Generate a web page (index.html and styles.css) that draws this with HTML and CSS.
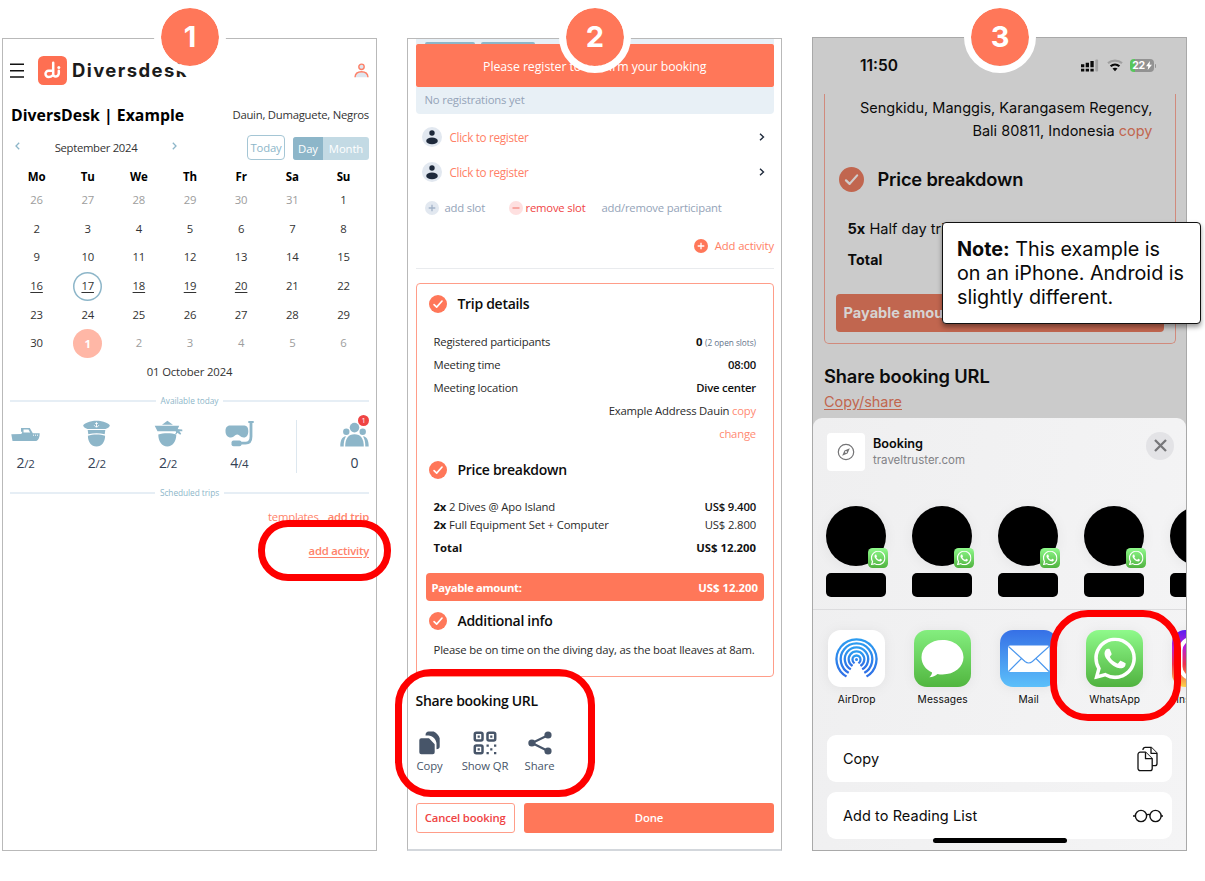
FILE: index.html
```html
<!DOCTYPE html>
<html lang="en">
<head>
<meta charset="utf-8">
<title>Diversdesk – share a booking</title>
<link rel="stylesheet" href="styles.css">
</head>
<body>
<svg class="defs" width="0" height="0">
  <defs>
    <linearGradient id="green" x1="0" y1="0" x2="0" y2="1"><stop offset="0" stop-color="#8ffa8b"/><stop offset="1" stop-color="#50b23f"/></linearGradient>
    <linearGradient id="green2" x1="0" y1="0" x2="0" y2="1"><stop offset="0" stop-color="#84ee7f"/><stop offset="1" stop-color="#51b63f"/></linearGradient>
    <linearGradient id="blue" x1="0" y1="0" x2="0" y2="1"><stop offset="0" stop-color="#3670e6"/><stop offset="1" stop-color="#5cc0fa"/></linearGradient>
    <linearGradient id="air" x1="0" y1="0" x2="0" y2="1"><stop offset="0" stop-color="#2c9cf0"/><stop offset="1" stop-color="#2f6fe6"/></linearGradient>
    <linearGradient id="insta" x1="0" y1="0" x2="0" y2="1"><stop offset="0" stop-color="#5a1df0"/><stop offset=".3" stop-color="#b91fd6"/><stop offset=".6" stop-color="#f0304c"/><stop offset="1" stop-color="#fcd34a"/></linearGradient>
    <symbol id="check" viewBox="0 0 20 20"><circle cx="10" cy="10" r="10"/><path d="M5.600 10.700l2.900 2.800 6-6.800" fill="none" stroke="var(--tick,#fff)" stroke-width="1.800" stroke-linecap="round" stroke-linejoin="round"/></symbol>
    <symbol id="person" viewBox="0 0 20 20"><circle cx="10" cy="10" r="10" fill="#e2e8f0"/><circle cx="10" cy="6" r="2.700" fill="#1e293b"/><ellipse cx="10" cy="13.900" rx="5.800" ry="3.400" fill="#1e293b"/></symbol>
    <symbol id="wa" viewBox="0 0 24 24"><path d="M17.472 14.382c-.297-.149-1.758-.867-2.03-.967-.273-.099-.471-.148-.67.15-.197.297-.767.966-.94 1.164-.173.199-.347.223-.644.075-.297-.15-1.255-.463-2.39-1.475-.883-.788-1.48-1.761-1.653-2.059-.173-.297-.018-.458.13-.606.134-.133.298-.347.446-.52.149-.174.198-.298.298-.497.099-.198.05-.371-.025-.52-.075-.149-.669-1.612-.916-2.207-.242-.579-.487-.5-.669-.51-.173-.008-.371-.01-.57-.01-.198 0-.52.074-.792.372-.272.297-1.04 1.016-1.04 2.479 0 1.462 1.065 2.875 1.213 3.074.149.198 2.096 3.2 5.077 4.487.709.306 1.262.489 1.694.625.712.227 1.36.195 1.871.118.571-.085 1.758-.719 2.006-1.413.248-.694.248-1.289.173-1.413-.074-.124-.272-.198-.57-.347m-5.421 7.403h-.004a9.87 9.87 0 01-5.031-1.378l-.361-.214-3.741.982.998-3.648-.235-.374a9.86 9.86 0 01-1.51-5.26c.001-5.45 4.436-9.884 9.888-9.884 2.64 0 5.122 1.03 6.988 2.898a9.825 9.825 0 012.893 6.994c-.003 5.45-4.437 9.884-9.885 9.884m8.413-18.297A11.815 11.815 0 0012.05 0C5.495 0 .16 5.335.157 11.892c0 2.096.547 4.142 1.588 5.945L.057 24l6.305-1.654a11.882 11.882 0 005.683 1.448h.005c6.554 0 11.89-5.335 11.893-11.893a11.821 11.821 0 00-3.48-8.413z" fill="#fff"/></symbol>
    <symbol id="waapp" viewBox="0 0 57 57"><rect width="57" height="57" rx="13" fill="url(#green)"/><use href="#wa" x="8" y="7.500" width="42" height="42"/></symbol>
  </defs>
</svg>

<main class="board">
  <section class="phone one">
    <header class="top">
      <svg class="burger" width="14" height="15"><path d="M0 1.200h14M0 7.700h14M0 14h14" stroke="#111" stroke-width="1.500"/></svg>
      <svg class="logo" width="29" height="29" viewBox="0 0 29 29"><rect width="29" height="29" rx="5.500" fill="#fe6f52"/><g fill="none" stroke="#fff" stroke-width="2.500" stroke-linecap="round" stroke-linejoin="round"><path d="M15.200 6.700v11.500a2.400 2.400 0 0 0 2 2.300 3.200 3.200 0 0 0 3.600-3.200v-2.500"/><path d="M14.900 14.800h-4.200a3 3 0 0 0-3.200 3 3 3 0 0 0 3.200 3.100c1.600 0 2.700-.4 4-1.600"/></g><circle cx="20.800" cy="11.400" r="1.500" fill="#fff"/></svg>
      <span class="brand">Diversdesk</span>
      <svg class="user" width="15" height="15" viewBox="0 0 15 15" fill="#dfe6ef" stroke="#fd8068" stroke-width="1.400"><circle cx="7.500" cy="3.800" r="2.700"/><path d="M1 14.200c.2-3.600 2.800-5.400 6.500-5.400s6.300 1.800 6.500 5.400"/></svg>
    </header>
    <div class="title"><h1>DiversDesk | Example</h1><span>Dauin, Dumaguete, Negros</span></div>
    <div class="monthbar">
      <svg width="5" height="8"><path d="M4.200.8L1 4l3.200 3.200" fill="none" stroke="#8db6c9" stroke-width="1.300"/></svg>
      <span class="month">September 2024</span>
      <svg width="5" height="8"><path d="M.8.8L4 4 .8 7.200" fill="none" stroke="#8db6c9" stroke-width="1.300"/></svg>
      <span class="today">Today</span>
      <span class="switch"><b>Day</b><i>Month</i></span>
    </div>
    <div class="cal">
      <b>Mo</b><b>Tu</b><b>We</b><b>Th</b><b>Fr</b><b>Sa</b><b>Su</b>
      <span class="off">26</span><span class="off">27</span><span class="off">28</span><span class="off">29</span><span class="off">30</span><span class="off">31</span><span>1</span>
      <span>2</span><span>3</span><span>4</span><span>5</span><span>6</span><span>7</span><span>8</span>
      <span>9</span><span>10</span><span>11</span><span>12</span><span>13</span><span>14</span><span>15</span>
      <span class="u">16</span><span class="u ringed">17</span><span class="u">18</span><span class="u">19</span><span class="u">20</span><span>21</span><span>22</span>
      <span>23</span><span>24</span><span>25</span><span>26</span><span>27</span><span>28</span><span>29</span>
      <span>30</span><span class="picked">1</span><span class="off">2</span><span class="off">3</span><span class="off">4</span><span class="off">5</span><span class="off">6</span>
    </div>
    <div class="date">01 October 2024</div>
    <div class="rule"><span>Available today</span></div>
    <div class="stock">
      <div class="item"><svg width="29" height="28" viewBox="0 0 29 28" fill="#8db6c9"><path d="M.3 14.300l10-.3 1.200-2.300H10V8h8.800l3 5.300h6.900c0 4-1 6.800-3.400 7.600H1.500z"/><path d="M12.500 9.500h5l1.700 3h-6.700z" fill="#fff"/><path d="M22 15.200h5" stroke="#fff" stroke-dasharray="1 1"/></svg><p>2<small>/2</small></p></div>
      <div class="item"><svg width="29" height="28" viewBox="0 0 29 28" fill="#8db6c9"><path d="M1.300 5.500C1.300 3.600 8 .8 14.500.8S27.700 3.600 27.700 5.500c0 1.400-1.600 2.700-4.200 3.500h-18C2.900 8.200 1.300 6.900 1.300 5.500z"/><path d="M5.700 10h17.600l-.6 4.300c-5-1.500-11.400-1.500-16.400 0z"/><path d="M5.900 15.800c5-1.800 12.200-1.800 17.200 0 0 6-3.300 10.800-8.600 10.800s-8.600-4.800-8.600-10.800z"/><path d="M14.500 2.200v5M12.300 5.300c.4 2 4 2 4.400 0M13.200 3.500h2.600" fill="none" stroke="#fff" stroke-width=".9"/></svg><p>2<small>/2</small></p></div>
      <div class="item"><svg width="29" height="28" viewBox="0 0 29 28" fill="#8db6c9"><path d="M8 4.800L13.400.8l5.500 4zM.7 5.800h24.500l-2.500 5.500H3.500z"/><path d="M22.700 9l5.500.6.2 1.600-3 .1 1.800 2.500-1 .9-2.800-2-1 1.600-1.200-.8z"/><path d="M4.300 14.500c5-1.600 13.200-1.600 18 0 0 6.700-3.500 12-9 12s-9-5.300-9-12z"/><path d="M4 12.500h18" stroke="#fff"/></svg><p>2<small>/2</small></p></div>
      <div class="item"><svg width="29" height="28" viewBox="0 0 29 28" fill="#8db6c9"><path d="M5 5.500h14.500C22 5.500 23.300 7.800 23.300 11c0 4-1.500 6.500-4.600 6.500-3.400 0-4-3-6.500-3s-3 3-6.200 3C2.500 17.500.5 15 .5 11 .5 7.800 2 5.500 5 5.500z"/><path d="M26 2v14.500c0 3.800-1.800 6.700-5.500 6.700H15" fill="none" stroke="#8db6c9" stroke-width="2.800"/><path d="M23.300 1h5.400v2h-5.400z"/><rect x="6.500" y="20.500" width="10" height="5.700" rx="2"/></svg><p>4<small>/4</small></p></div>
      <div class="item crowd"><svg width="29" height="28" viewBox="0 0 29 28" fill="#8db6c9"><circle cx="14.500" cy="7.600" r="4.800"/><circle cx="6.300" cy="11.800" r="3.200"/><circle cx="22.700" cy="11.800" r="3.200"/><path d="M5.200 26.500c0-8 3-12.300 9.300-12.300s9.300 4.300 9.300 12.300z"/><path d="M.3 26.500c0-6 1.600-9.800 5.700-10.200C4.300 19 3.700 22.500 3.700 26.500zM28.700 26.500c0-6-1.600-9.800-5.700-10.200 1.700 2.700 2.300 6.200 2.300 10.200z"/></svg><em>1</em><p>0</p></div>
    </div>
    <div class="rule second"><span>Scheduled trips</span></div>
    <div class="links"><a>templates</a><a class="sb">add trip</a></div>
    <div class="links act"><a class="sb">add activity</a></div>
  </section>

  <section class="phone two">
    <div class="strip"><i></i><i></i></div>
    <div class="banner">Please register to confirm your booking</div>
    <div class="none">No registrations yet</div>
    <div class="reg"><svg width="20" height="20"><use href="#person"/></svg><span>Click to register</span><svg width="6" height="8"><path d="M1 .8L4.500 4 1 7.200" fill="none" stroke="#1e293b" stroke-width="1.400"/></svg></div>
    <div class="reg"><svg width="20" height="20"><use href="#person"/></svg><span>Click to register</span><svg width="6" height="8"><path d="M1 .8L4.500 4 1 7.200" fill="none" stroke="#1e293b" stroke-width="1.400"/></svg></div>
    <div class="slots">
      <svg width="14" height="14"><circle cx="7" cy="7" r="7" fill="#e2e8f0"/><path d="M3.700 7h6.600M7 3.700v6.600" stroke="#a3b3c8" stroke-width="1.300"/></svg><span class="add">add slot</span>
      <svg width="14" height="14"><circle cx="7" cy="7" r="7" fill="#fee0e0"/><path d="M3.500 7h7" stroke="#f58a82" stroke-width="1.300"/></svg><span class="rem">remove slot</span><span class="par">add/remove participant</span>
    </div>
    <div class="addact"><svg width="14" height="14"><circle cx="7" cy="7" r="7" fill="#ff7759"/><path d="M3.700 7h6.600M7 3.700v6.600" stroke="#fff" stroke-width="1.300"/></svg><span>Add activity</span></div>
    <div class="card">
      <h2><svg width="18" height="18" fill="#ff7759"><use href="#check"/></svg>Trip details</h2>
      <dl class="trip">
        <div><dt>Registered participants</dt><dd><b>0</b> <small>(2 open slots)</small></dd></div>
        <div><dt>Meeting time</dt><dd class="sb">08:00</dd></div>
        <div><dt>Meeting location</dt><dd class="sb">Dive center</dd></div>
        <div><dt></dt><dd>Example Address Dauin <a>copy</a></dd></div>
        <div><dt></dt><dd><a>change</a></dd></div>
      </dl>
      <h2 class="h-price"><svg width="18" height="18" fill="#ff7759"><use href="#check"/></svg>Price breakdown</h2>
      <dl class="price">
        <div><dt><b>2x</b> 2 Dives @ Apo Island</dt><dd class="sb">US$ 9.400</dd></div>
        <div><dt><b>2x</b> Full Equipment Set + Computer</dt><dd>US$ 2.800</dd></div>
        <div class="total"><dt>Total</dt><dd>US$ 12.200</dd></div>
      </dl>
      <div class="pay"><span>Payable amount:</span><span class="sum">US$ 12.200</span></div>
      <h2 class="h-info"><svg width="18" height="18" fill="#ff7759"><use href="#check"/></svg>Additional info</h2>
      <p class="info">Please be on time on the diving day, as the boat lleaves at 8am.</p>
    </div>
    <h2 class="share">Share booking URL</h2>
    <div class="actions">
      <div><svg width="24" height="24" fill="#475569"><path d="M3.300 7.300H11l5.700 6V21.200a2 2 0 0 1-2 2H3.300a2 2 0 0 1-2-2V9.300a2 2 0 0 1 2-2z"/><path d="M7.500 4.500C7.500 1.500 9 .5 10.500.5h5.200c3 1.500 5.300 4 6 6.700v8.300c0 1.800-1.300 2.700-3.200 2.700v-5.500c0-4-4-8.200-8-8.200z"/></svg><span>Copy</span></div>
      <div><svg width="24" height="24" fill="none" stroke="#475569" stroke-width="2.500"><rect x="1.800" y="1.800" width="7.700" height="7.700" rx="1.500"/><rect x="14.500" y="1.800" width="7.700" height="7.700" rx="1.500"/><rect x="1.800" y="14.500" width="7.700" height="7.700" rx="1.500"/><g fill="#475569" stroke="none"><path d="M4.600 4.600h2.200v2.200H4.600zM17.200 4.600h2.200v2.200h-2.200zM4.600 17.200h2.200v2.200H4.600zM13.500 13.500h2.300v2.300h-2.300zM17.200 17.200h2.200v2.200h-2.200zM21 13.500h2.300v2.300H21zM13.500 21h2.300v2.300h-2.300zM21 21h2.300v2.300H21z"/></g></svg><span>Show QR</span></div>
      <div><svg width="24" height="24" fill="#475569"><path d="M20 4.200L4 12l16 8" fill="none" stroke="#475569" stroke-width="2.200"/><circle cx="20" cy="4" r="3.600"/><circle cx="3.900" cy="12" r="3.600"/><circle cx="20" cy="20" r="3.600"/></svg><span>Share</span></div>
    </div>
    <div class="buttons"><button class="cancel">Cancel booking</button><button class="done">Done</button></div>
  </section>

  <section class="phone three">
    <div class="status">
      <span class="clock">11:50</span>
      <svg class="signal" width="20" height="14"><path d="M1 5.200h3.300v3H1zM5.700 3.800H9v4.400H5.700zM10.400 2h3.300v6.200h-3.300zM1 9.800h3.300v2.700H1zM5.700 9.800H9v2.700H5.700zM10.400 9.800h3.300v2.700h-3.300z" fill="#0a0a0a"/><rect x="15.300" y=".5" width="2.800" height="12" rx="1" fill="#a3a3a3"/></svg>
      <svg class="wifi" width="16" height="13" fill="none" stroke-width="2.200"><path d="M1 4.200c4-3.500 10-3.500 14 0" stroke="#a0a0a0"/><path d="M3.600 7.200c2.600-2.300 6.200-2.300 8.800 0" stroke="#0a0a0a"/><path d="M8 12.300L5.500 9.600c1.500-1.300 3.500-1.300 5 0z" fill="#0a0a0a"/></svg>
      <span class="battery">22<svg width="6" height="9"><path d="M4 0L0 5.200h2.300L1.700 9 6 3.700H3.500z" fill="#fff"/></svg></span><i class="nub"></i>
    </div>
    <div class="pcard">
      <p class="addr">Sengkidu, Manggis, Karangasem Regency,<br>Bali 80811, Indonesia <a>copy</a></p>
      <h2><svg width="25" height="25" fill="#c1664f"><use href="#check"/></svg>Price breakdown</h2>
      <p class="half"><b>5x</b> Half day trip</p>
      <p class="tot">Total</p>
      <div class="ppay">Payable amount:</div>
    </div>
    <h2 class="pshare">Share booking URL</h2>
    <a class="cs">Copy/share</a>
    <div class="sheet">
      <div class="head">
        <span class="tile"><svg width="18" height="18" fill="none" stroke="#747476" stroke-width="1.200"><circle cx="9" cy="9" r="7.700"/><path d="M12.800 5.200L10.500 10.500 5.200 12.800 7.500 7.500z" fill="#747476" stroke="none"/><circle cx="9" cy="9" r="1" fill="#fff" stroke="none"/></svg></span>
        <span class="meta"><b>Booking</b><i>traveltruster.com</i></span>
        <span class="x"><svg width="13" height="13"><path d="M1 1l11 11M12 1L1 12" stroke="#77777a" stroke-width="2.300"/></svg></span>
      </div>
      <div class="people">
        <div><i></i><svg width="20" height="20"><use href="#waapp"/></svg><b></b></div>
        <div><i></i><svg width="20" height="20"><use href="#waapp"/></svg><b></b></div>
        <div><i></i><svg width="20" height="20"><use href="#waapp"/></svg><b></b></div>
        <div><i></i><svg width="20" height="20"><use href="#waapp"/></svg><b></b></div>
        <div><i></i><b></b></div>
      </div>
      <div class="apps">
        <div><svg width="57" height="57"><rect width="57" height="57" rx="13" fill="#fff"/><g fill="none" stroke="url(#air)" stroke-width="2.300"><path d="M19.200 47A20 20 0 1 1 37.800 47"/><path d="M21.300 43.200A15.800 15.800 0 1 1 35.700 43.200" /><path d="M23.200 39.500A11.700 11.700 0 1 1 33.800 39.500"/><path d="M24.600 36A7.800 7.800 0 1 1 32.400 36"/><circle cx="28.500" cy="29.500" r="4"/></g><path d="M28.500 30L40 49H17z" fill="#fff"/><circle cx="28.500" cy="29.500" r="1.500" fill="#2e86eb"/></svg><span>AirDrop</span></div>
        <div><svg width="57" height="57"><rect width="57" height="57" rx="13" fill="url(#green2)"/><path d="M28.500 10C40.500 10 49.500 17.500 49.500 27.300S40.500 44.500 28.500 44.500c-1.800 0-3.400-.1-5-.5-2 1.600-4.800 3-8.200 3.300 1.600-1.300 2.600-3 2.800-4.800C11.600 39.600 7.500 34 7.500 27.300 7.500 17.500 16.500 10 28.500 10z" fill="#fff"/></svg><span>Messages</span></div>
        <div><svg width="57" height="57"><rect width="57" height="57" rx="13" fill="url(#blue)"/><rect x="8" y="15.500" width="41.500" height="26.500" rx="2" fill="#fff"/><path d="M8.500 16.500L25 31.500q3.700 3 7.400 0L49 16.500M8.500 41.500L21.500 28.500M49 41.500L36 28.500" fill="none" stroke="#4a97ee" stroke-width="1.100"/></svg><span>Mail</span></div>
        <div><svg width="57" height="57"><use href="#waapp"/></svg><span>WhatsApp</span></div>
        <div><svg width="57" height="57"><rect width="57" height="57" rx="13" fill="url(#insta)"/><rect x="8.500" y="8.500" width="40" height="40" rx="12" fill="none" stroke="#fff" stroke-width="4"/></svg><span>Instagram</span></div>
      </div>
      <div class="opt">Copy<svg width="22" height="26" viewBox="0 0 22 26" fill="#fff" stroke="#111" stroke-width="1.300" stroke-linejoin="round"><path d="M6 4v-.5A2.200 2.200 0 0 1 8.200 1.300H14l6 6V17.500a2.200 2.200 0 0 1-2.200 2.200H13"/><path d="M14 1.300V7.300h6"/><path d="M3.200 6.200H8.500l6.700 6.500V22.500a2.200 2.200 0 0 1-2.200 2.200H3.200A2.200 2.200 0 0 1 1 22.500V8.400a2.200 2.200 0 0 1 2.200-2.200z"/><path d="M8.500 6.200v6.500h6.700"/></svg></div>
      <div class="opt wide">Add to Reading List<svg class="glasses" width="30" height="14" fill="none" stroke="#111" stroke-width="1.400"><circle cx="8" cy="7" r="5.600"/><circle cx="22.500" cy="7" r="5.600"/><path d="M13.300 6q2-1.300 3.900 0M0 7h2.500M28 7h2.500"/></svg></div>
      <div class="home"></div>
    </div>
  </section>

  <div class="badge b1">1</div>
  <div class="badge b2">2</div>
  <div class="badge b3">3</div>
  <div class="mark m1"></div>
  <div class="mark m2"></div>
  <div class="mark m3"></div>
  <aside class="note"><b>Note:</b> This example is<br>on an iPhone. Android is<br>slightly different.</aside>
</main>
</body>
</html>
```
FILE: styles.css
```css
* { box-sizing: border-box; }
body { margin: 0; background: #fff; }
p, h1, h2, dl, dd { margin: 0; }
i, em { font-style: normal; }
svg { display: block; flex: none; }
.defs { position: absolute; }
.board { position: relative; width: 1205px; height: 881px; overflow: hidden; display: flex; align-items: flex-start; gap: 30px; padding: 38px 0 0 2px; }
.phone { flex: none; width: 375px; height: 813px; border: 1px solid #b9b9b9; overflow: hidden; font-family: "Open Sans", "Noto Sans", sans-serif; font-size: 11.300px; line-height: 16px; color: #222; white-space: nowrap; letter-spacing: -.2px; display: flex; flex-direction: column; }
.sb { font-weight: 600; }

/* Screen 1: planner */
.one { padding: 0 7px; }
.top { height: 62px; display: flex; align-items: center; }
.logo { margin: 0 5px 0 14px; }
.brand { font: 650 18.500px/24px Inter, sans-serif; letter-spacing: 1.400px; color: #1b1b1b; }
.user { margin-left: auto; }
.title { height: 28px; display: flex; align-items: center; justify-content: space-between; color: #333; letter-spacing: -.24px; }
.title h1 { font-size: 15.800px; font-weight: 700; color: #000; padding-left: 1px; letter-spacing: .03px; }
.monthbar { height: 38px; display: flex; align-items: center; padding-left: 5px; letter-spacing: -.3px; }
.monthbar svg { margin-top: -4px; }
.month { width: 152px; text-align: center; color: #333; }
.today { margin-left: auto; width: 38px; height: 25px; line-height: 23px; text-align: center; border: 1px solid #a5c6d5; border-radius: 4px; color: #8db6c9; letter-spacing: -.15px; position: relative; top: -.5px; }
.switch { margin-left: 8px; width: 76px; height: 23px; line-height: 24px; display: flex; border-radius: 3px; overflow: hidden; color: #fff; text-align: center; background: #c3dae4; letter-spacing: -.1px; }
.switch b { width: 30px; background: #8db6c9; font-weight: 400; }
.switch i { flex: 1; }
.cal { display: grid; grid-template-columns: repeat(7, 1fr); grid-template-rows: 19px repeat(6, 28.600px); place-items: center; padding-left: 1px; color: #333; font-size: 11.300px; }
.cal b { font-size: 11.500px; color: #000; font-weight: 700; }
.cal .off { color: #9d9d9d; }
.cal .u { text-decoration: underline; text-underline-offset: 2px; }
.ringed, .picked { width: 29px; height: 29px; line-height: 27px; border-radius: 50%; text-align: center; box-shadow: inset 0 0 0 1.500px #8db6c9; }
.cal .picked { box-shadow: none; background: #ffb7a6; color: #fff; font-weight: 700; line-height: 29px; }
.date { height: 28px; line-height: 28px; text-align: center; color: #333; letter-spacing: -.12px; }
.rule { height: 30px; display: flex; align-items: center; gap: 5px; font-size: 8.300px; letter-spacing: -.05px; color: #8db6c9; }
.rule::before, .rule::after { content: ""; height: 2px; flex: 1; background: #e6eef5; }
.stock { position: relative; height: 62px; padding: 4px 0 0 1px; display: flex; }
.stock::after { content: ""; position: absolute; left: 286px; top: 4px; width: 1px; height: 53px; background: #dde7ef; }
.item { width: 71.300px; }
.item p { width: 29px; height: 26px; line-height: 30px; text-align: center; font-size: 14px; color: #334155; font-weight: 500; }
.item small { font-size: 11.500px; }
.crowd { position: relative; width: 29px; margin-left: auto; }
.crowd em { position: absolute; right: 0; top: -5px; width: 11px; height: 11px; border-radius: 50%; background: #ef4444; color: #fff; font-size: 7.500px; line-height: 11px; text-align: center; }
.links { margin-top: 1px; height: 18px; display: flex; justify-content: flex-end; gap: 9px; color: #ff826a; letter-spacing: -.22px; }
.links.act { margin-top: 16px; text-decoration: underline; text-underline-offset: 2px; }

/* Screen 2: booking */
.two { padding: 0 7px 0 7.500px; border-bottom: 2px solid #d3d7dc; color: #2a2a2a; }
.strip { height: 5px; background: #e8f0f6; padding: 3px 0 0 9px; display: flex; gap: 6px; }
.strip i { width: 50px; background: #8db6c9; border-radius: 3px 3px 0 0; }
.strip i + i { width: 54px; }
.banner { height: 43px; line-height: 45px; background: #ff7759; border-radius: 2px; text-align: center; color: #fff; font-size: 12.300px; letter-spacing: -.05px; }
.none { height: 27px; line-height: 26px; padding-left: 9px; background: #e8f0f6; border-radius: 0 0 4px 4px; color: #94a3b8; letter-spacing: -.17px; }
.reg { height: 34.500px; display: flex; align-items: center; padding: 0 9px 0 6px; color: #ff7f66; }
.none + .reg { margin-top: 6px; }
.reg span { flex: 1; padding-left: 8px; font-size: 11.700px; letter-spacing: -.3px; }
.slots { height: 38px; display: flex; align-items: center; padding-left: 9px; color: #94a3b8; }
.slots span { padding-left: 6px; }
.slots .add { width: 70px; }
.slots .rem { padding-left: 3px; width: 79px; color: #f04444; font-weight: 500; }
.slots .par { padding-left: 0; }
.addact { height: 42px; padding-bottom: 4px; display: flex; align-items: center; justify-content: flex-end; gap: 7px; color: #ff7f66; border-bottom: 1px solid #e9ebee; letter-spacing: -.12px; }
.card { margin-top: 13.500px; height: 394px; border: 1px solid #ff9d89; border-radius: 4px; padding: 0 9px; }
.two h2 { height: 40px; display: flex; align-items: center; font-size: 14px; letter-spacing: -.3px; font-weight: 600; color: #0c0c0c; }
.card h2 svg { margin: 0 11px 0 3px; }
.card dl { padding: 0 8px; }
.card dl div { display: flex; justify-content: space-between; height: 23px; line-height: 23px; }
.card dl b { color: #111; }
.card dd.sb { color: #111; }
.trip { margin-top: 6px; }
.card small { font-size: 8.300px; letter-spacing: -.05px; color: #64748b; }
.card a { color: #ff8a73; }
.card h2.h-price { height: 38px; margin-top: 6px; }
.price { margin-top: 9.500px; height: 74.500px; letter-spacing: -.15px; }
.card .price div { height: 17.500px; line-height: 17.500px; }
.card .price .total { height: 29px; line-height: 29px; font-weight: 700; color: #111; letter-spacing: 0; }
.pay { height: 28px; line-height: 29px; display: flex; justify-content: space-between; background: #ff7759; border-radius: 4px; color: #fff; font-weight: 700; padding: 0 6px; letter-spacing: -.35px; }
.pay .sum { letter-spacing: 0; }
.card h2.h-info { height: 41px; }
.info { margin-top: -1.500px; padding-left: 8px; height: 20px; line-height: 20px; letter-spacing: -.17px; }
.two h2.share { margin-top: 9px; height: 30px; }
.actions { display: flex; height: 58px; padding-top: 15px; color: #475569; letter-spacing: -.1px; }
.actions div { display: flex; flex-direction: column; align-items: center; width: 28px; }
.actions div + div { margin-left: 18px; width: 47px; }
.actions div + div + div { margin-left: 17px; width: 28px; }
.actions span { margin-top: 3px; }
.buttons { margin-top: 29px; display: flex; gap: 9px; height: 30px; }
button { font: 600 11.300px/20px "Open Sans", sans-serif; letter-spacing: -.15px; padding: 0; border-radius: 3px; }
.cancel { width: 99.500px; border: 1px solid #ff9d89; background: #fff; color: #ef4444; }
.done { flex: 1; border: 0; background: #ff7759; color: #fff; }

/* Screen 3: share sheet */
.three { margin-top: -1px; height: 814px; background: #cbcbcb; font-family: Inter, "Liberation Sans", sans-serif; font-size: 14.600px; line-height: 23px; letter-spacing: 0; color: #0b0b0b; border-color: #a9a9a9; }
.status { height: 56px; display: flex; align-items: center; padding: 0 0 1px 47px; }
.clock { font-weight: 600; font-size: 15.500px; width: 220px; }
.wifi { margin: 0 7px 0 7px; }
.battery { width: 24px; height: 13px; border-radius: 4px; background: linear-gradient(90deg, #57c65b 22%, #929292 22%); color: #fff; font-weight: 700; font-size: 10.500px; line-height: 13px; display: flex; align-items: center; justify-content: center; gap: 1px; letter-spacing: -.3px; }
.nub { width: 1px; height: 4px; margin-left: 1px; border-radius: 0 1px 1px 0; background: #929292; }
.pcard { margin: 0 10.500px 0 10.500px; height: 250px; border: 1.500px solid #d18a7c; border-top: 0; border-radius: 0 0 5px 5px; padding: 2px 11px 0; }
.addr { text-align: right; padding-right: 11px; font-size: 14.500px; }
.pcard a, .cs { color: #c1664f; }
.pcard h2 { --tick: #d0cccb; margin-top: 25px; height: 25px; display: flex; align-items: center; gap: 14px; font-size: 18.300px; font-weight: 600; padding-left: 3px; letter-spacing: -.2px; }
.half { margin-top: 26px; padding-left: 12px; }
.tot { margin-top: 7px; padding-left: 12px; font-weight: 700; font-size: 14.200px; letter-spacing: .1px; }
.ppay { margin-top: 23px; height: 38px; line-height: 39px; background: #c1664f; border-radius: 4px; color: #d6d3d2; font-weight: 700; padding-left: 8px; }
.pshare { margin: 20px 0 0 11px; font-size: 18.300px; line-height: 24px; font-weight: 600; letter-spacing: -.12px; }
.cs { margin-left: 11px; height: 30px; line-height: 28px; text-decoration: underline; text-underline-offset: 2px; font-size: 14.500px; letter-spacing: -.05px; }
.sheet { position: relative; flex: 1; background: linear-gradient(100deg, #efeff0, #f4f4f5); border-radius: 9px 9px 0 0; padding: 0 14px; }
.head { height: 68px; display: flex; align-items: center; }
.tile { width: 38px; height: 38px; border-radius: 4px; background: #fff; display: grid; place-items: center; }
.meta { margin: -1px 0 0 8px; flex: 1; display: flex; flex-direction: column; font-size: 11.500px; line-height: 17px; }
.meta b { font-size: 12.700px; font-weight: 600; }
.meta i { color: #828286; }
.x { width: 28px; height: 28px; margin: -13px -2px 0 0; border-radius: 50%; background: #e3e3e6; display: grid; place-items: center; }
.people { margin: 0 -14px; padding: 20px 0 0 13px; height: 124px; display: flex; gap: 26px; border-bottom: 1px solid #dcdcde; overflow: hidden; }
.people div { position: relative; flex: none; width: 60px; }
.people i { display: block; width: 60px; height: 60px; border-radius: 50%; background: #000; box-shadow: 0 2px 14px rgba(0, 0, 0, .06); }
.people svg { position: absolute; left: 42px; top: 42px; }
.people b { display: block; margin-top: 7px; height: 24px; border-radius: 5px; background: #000; }
.apps { margin: 0 -14px; padding: 20px 0 0 .7px; height: 125px; display: flex; overflow: hidden; }
.apps div { flex: none; width: 86px; display: flex; flex-direction: column; align-items: center; font-size: 10.200px; line-height: 14px; gap: 5px; letter-spacing: .12px; }
.apps svg { filter: drop-shadow(0 1px 6px rgba(0, 0, 0, .06)); }
.opt { height: 47px; margin-bottom: 10px; padding: 0 13px 0 16px; background: #fff; border-radius: 9px; display: flex; align-items: center; justify-content: space-between; font-size: 14.500px; }
.wide { letter-spacing: .06px; }
.glasses { margin-right: -4px; }
.home { position: absolute; left: 120px; bottom: 7px; width: 134px; height: 5px; border-radius: 3px; background: #000; }

/* Callouts drawn over the screens */
.badge { position: absolute; top: 1px; width: 72px; height: 72px; border: 7px solid #fff; border-radius: 50%; background: #ff7759; background-clip: padding-box; color: #fff; font: 700 29px/58px Inter, sans-serif; text-align: center; }
.b1 { left: 154px; }
.b2 { left: 559px; }
.b3 { left: 964px; }
.mark { position: absolute; border: 7px solid #fe0000; }
.m1 { left: 258px; top: 520px; width: 133px; height: 61px; border-radius: 30px; }
.m2 { left: 395px; top: 669px; width: 200px; height: 128px; border-radius: 36px; }
.m3 { left: 1050px; top: 610px; width: 131px; height: 111px; border-radius: 38px; }
.note { position: absolute; left: 942px; top: 222px; width: 259px; height: 102px; padding: 14px; background: #fff; border: 1px solid #111; border-radius: 4px; box-shadow: 0 3px 5px rgba(0, 0, 0, .4); font: 400 19.800px/24px Inter, sans-serif; color: #0a0a0a; white-space: nowrap; }
```
